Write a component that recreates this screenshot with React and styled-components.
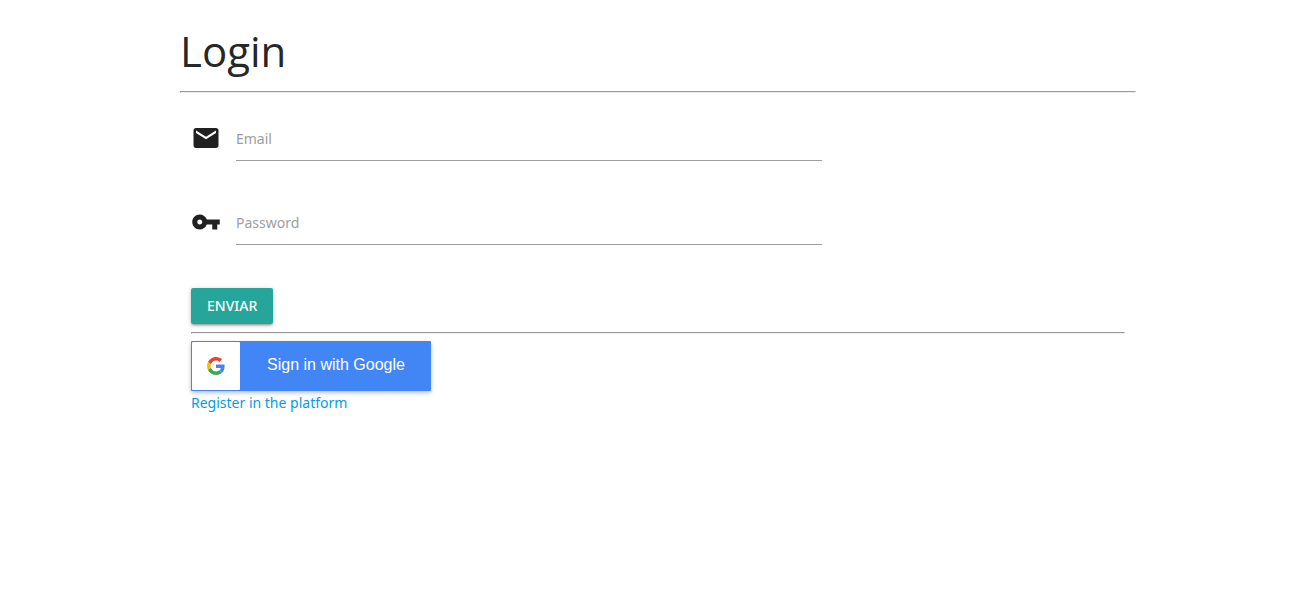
import React from "react";
import styled, { createGlobalStyle } from "styled-components";

const GlobalStyle = createGlobalStyle`
  *, *::before, *::after { box-sizing: border-box; }
  body {
    margin: 0;
    background: #fff;
    color: rgba(0, 0, 0, 0.87);
    font-family: "Noto Sans", "Open Sans", sans-serif;
    font-size: 14px;
    line-height: 22px;
  }
`;

const Page = styled.main`
  padding: 24px 167px 24px 180px;
`;

const Title = styled.h1`
  margin: 0 0 14px;
  font-family: "Open Sans", "Noto Sans", sans-serif;
  font-size: 42px;
  font-weight: 400;
  line-height: 53px;
`;

const Divider = styled.hr`
  margin: 0;
  height: 2px;
  border: 1px solid;
  border-color: #9a9a9a #eee #eee #9a9a9a;
`;

const Content = styled.section`
  padding: 23px 11px 0;
`;

const Form = styled.form`
  display: flex;
  flex-direction: column;
  align-items: flex-start;
  gap: 39px;
  max-width: 631px;
  margin-bottom: 8px;
`;

const Field = styled.div`
  display: flex;
  align-items: flex-start;
  gap: 15px;
  width: 100%;
  height: 45px;
`;

const FieldIcon = styled.svg`
  width: 30px;
  height: 30px;
  margin-top: 7px;
  flex: none;
  fill: currentColor;
`;

const Input = styled.input`
  flex: 1;
  min-width: 0;
  height: 45px;
  padding: 0;
  border: 0;
  border-bottom: 1px solid #9e9e9e;
  border-radius: 0;
  outline: none;
  background: transparent;
  color: inherit;
  font: inherit;

  &::placeholder {
    color: #9e9e9e;
    opacity: 1;
  }
  &:focus {
    border-bottom-color: #26a69a;
  }
`;

const SubmitButton = styled.button`
  height: 36px;
  margin-top: 4px;
  padding: 0 16px;
  border: 0;
  border-radius: 2px;
  background: #26a69a;
  box-shadow: 0 2px 2px 0 rgba(0, 0, 0, 0.14), 0 3px 1px -2px rgba(0, 0, 0, 0.12),
    0 1px 5px 0 rgba(0, 0, 0, 0.2);
  color: #fff;
  font: 500 14px/36px "Noto Sans", "Open Sans", sans-serif;
  text-transform: uppercase;
  cursor: pointer;
`;

const GoogleButton = styled.button`
  display: flex;
  width: 240px;
  height: 50px;
  margin-top: 7px;
  padding: 1px;
  border: 0;
  border-radius: 1px;
  background: #4285f4;
  box-shadow: 0 2px 4px 0 rgba(0, 0, 0, 0.25);
  color: #fff;
  font: 400 16px/46px "Liberation Sans", Arial, sans-serif;
  cursor: pointer;
`;

const GoogleMark = styled.span`
  display: grid;
  place-items: center;
  width: 48px;
  height: 48px;
  border-radius: 1px;
  background: #fff;
`;

const GoogleLabel = styled.span`
  flex: 1;
  padding-left: 2px;
  text-align: center;
`;

const RegisterLink = styled.a`
  display: inline-block;
  margin-top: 1px;
  color: #039be5;
  text-decoration: none;
`;

const GoogleLogo = () => (
  <svg width="18" height="18" viewBox="0 0 48 48" aria-hidden="true">
    <path fill="#EA4335" d="M24 9.5c3.54 0 6.71 1.22 9.21 3.6l6.85-6.85C35.9 2.38 30.47 0 24 0 14.62 0 6.51 5.38 2.56 13.22l7.98 6.19C12.43 13.72 17.74 9.5 24 9.5z" />
    <path fill="#4285F4" d="M46.98 24.55c0-1.57-.15-3.09-.38-4.55H24v9.02h12.94c-.58 2.96-2.26 5.48-4.78 7.18l7.73 6c4.51-4.18 7.09-10.36 7.09-17.65z" />
    <path fill="#FBBC05" d="M10.53 28.59c-.48-1.45-.76-2.99-.76-4.59s.27-3.14.76-4.59l-7.98-6.19C.92 16.46 0 20.12 0 24c0 3.88.92 7.54 2.56 10.78l7.97-6.19z" />
    <path fill="#34A853" d="M24 48c6.48 0 11.93-2.13 15.89-5.81l-7.73-6c-2.15 1.45-4.92 2.3-8.16 2.3-6.26 0-11.57-4.22-13.47-9.91l-7.98 6.19C6.51 42.62 14.62 48 24 48z" />
  </svg>
);

export default function App() {
  return (
    <>
      <GlobalStyle />
      <Page>
        <Title>Login</Title>
        <Divider />
        <Content>
          <Form onSubmit={(e) => e.preventDefault()}>
            <Field>
              <FieldIcon viewBox="0 0 24 24" aria-hidden="true">
                <path d="M20 4H4c-1.1 0-1.99.9-1.99 2L2 18c0 1.1.9 2 2 2h16c1.1 0 2-.9 2-2V6c0-1.1-.9-2-2-2zm0 4l-8 5-8-5V6l8 5 8-5v2z" />
              </FieldIcon>
              <Input type="email" name="email" placeholder="Email" aria-label="Email" />
            </Field>
            <Field>
              <FieldIcon viewBox="0 0 24 24" aria-hidden="true">
                <path d="M12.65 10C11.83 7.67 9.61 6 7 6c-3.31 0-6 2.69-6 6s2.69 6 6 6c2.61 0 4.83-1.67 5.65-4H17v4h4v-4h2v-4H12.65zM7 14c-1.1 0-2-.9-2-2s.9-2 2-2 2 .9 2 2-.9 2-2 2z" />
              </FieldIcon>
              <Input type="password" name="password" placeholder="Password" aria-label="Password" />
            </Field>
            <SubmitButton type="submit">Enviar</SubmitButton>
          </Form>
          <Divider />
          <GoogleButton type="button">
            <GoogleMark>
              <GoogleLogo />
            </GoogleMark>
            <GoogleLabel>Sign in with Google</GoogleLabel>
          </GoogleButton>
          <RegisterLink href="#register">Register in the platform</RegisterLink>
        </Content>
      </Page>
    </>
  );
}
